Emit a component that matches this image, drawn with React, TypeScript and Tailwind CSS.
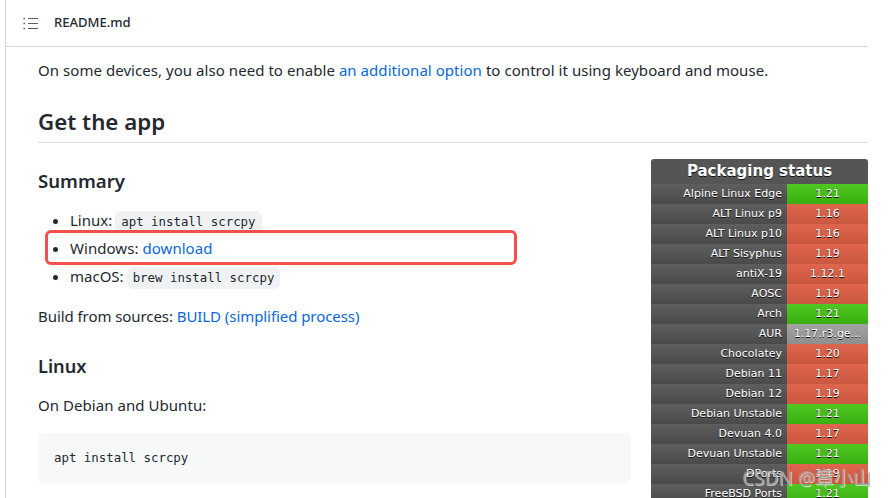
interface Row {
  name: string;
  version: string;
  status: 'ok' | 'old' | 'other';
}

const rows: Row[] = [
  { name: 'Alpine Linux Edge', version: '1.21', status: 'ok' },
  { name: 'ALT Linux p9', version: '1.16', status: 'old' },
  { name: 'ALT Linux p10', version: '1.16', status: 'old' },
  { name: 'ALT Sisyphus', version: '1.19', status: 'old' },
  { name: 'antiX-19', version: '1.12.1', status: 'old' },
  { name: 'AOSC', version: '1.19', status: 'old' },
  { name: 'Arch', version: '1.21', status: 'ok' },
  { name: 'AUR', version: '1.17.r3.ge...', status: 'other' },
  { name: 'Chocolatey', version: '1.20', status: 'old' },
  { name: 'Debian 11', version: '1.17', status: 'old' },
  { name: 'Debian 12', version: '1.19', status: 'old' },
  { name: 'Debian Unstable', version: '1.21', status: 'ok' },
  { name: 'Devuan 4.0', version: '1.17', status: 'old' },
  { name: 'Devuan Unstable', version: '1.21', status: 'ok' },
  { name: 'DPorts', version: '1.19', status: 'old' },
  { name: 'FreeBSD Ports', version: '1.21', status: 'ok' },
];

const statusClass = {
  ok: 'from-[#4ec820] to-[#3aae12]',
  old: 'from-[#e0654e] to-[#c9573f]',
  other: 'from-[#a3a3a3] to-[#8e8e8e]',
};

function InlineCode({ children }: { children: string }) {
  return (
    <code className="ml-[3px] inline-block h-[22px] rounded-md bg-[#eff1f3] px-[6px] align-middle font-['DejaVu_Sans_Mono',monospace] text-[12.4px] leading-[22px]">
      {children}
    </code>
  );
}

function PackagingStatus() {
  return (
    <div className="w-[217px] shrink-0 overflow-hidden rounded-t-[3px] font-['DejaVu_Sans',sans-serif] text-white [text-shadow:0_1px_0_#111]">
      <div className="flex h-[25px] items-center justify-center bg-[#555] text-[15px] font-bold">Packaging status</div>
      {rows.map((row) => (
        <div key={row.name} className="flex h-5 text-[11px] leading-5">
          <div className="w-[136px] truncate bg-linear-to-b from-[#5e5e5e] to-[#4a4a4a] pr-[5px] text-right">{row.name}</div>
          <div className={`flex-1 bg-linear-to-b text-center ${statusClass[row.status]}`}>{row.version}</div>
        </div>
      ))}
    </div>
  );
}

export default function App() {
  return (
    <div className="relative h-[498px] w-[888px] overflow-hidden bg-white font-['Noto_Sans',sans-serif] text-[#24292f]">
      <div className="ml-[5px] h-full border-l border-[#d0d7de] pr-5">
        <div className="flex h-[47px] items-center border-b border-[#d0d7de] pl-[17px]">
          <svg width="15" height="13" viewBox="0 0 15 13" className="text-[#57606a]" fill="none" stroke="currentColor">
            <path d="M5 1.5h10M5 6.5h10M5 11.5h10" strokeWidth="1.2" />
            <path d="M0.5 1.5h1.5M0.5 6.5h1.5M0.5 11.5h1.5" strokeWidth="1.4" />
          </svg>
          <span className="ml-[16px] text-[13px] font-medium">README.md</span>
        </div>

        <div className="pl-8">
          <p className="mt-[11px] text-[15px] leading-6 tracking-[0.05px]">
            On some devices, you also need to enable <a className="text-[#0969da]">an additional option</a> to control it using keyboard and mouse.
          </p>
          <h2 className="mt-[25px] border-b border-[#d8dee4] pb-[5px] text-[22.3px] leading-[30px] font-semibold">Get the app</h2>

          <div className="mt-4 flex justify-between">
            <div className="w-[593px]">
              <h3 className="mt-[8px] text-[18.6px] leading-[28px] font-semibold">Summary</h3>
              <ul className="mt-[12px] list-disc pl-8 text-[15px]">
                <li className="h-[27px] leading-[27px]">Linux:<InlineCode>apt install scrcpy</InlineCode></li>
                <li className="h-[28px] pt-px leading-[27px] tracking-[0.05px]">Windows: <a className="text-[#0969da]">download</a></li>
                <li className="h-[28px] leading-[28px]">macOS:<InlineCode>brew install scrcpy</InlineCode></li>
              </ul>
              <p className="mt-[14px] text-[15px] leading-6 tracking-[-0.07px]">
                Build from sources: <a className="text-[#0969da]">BUILD</a> <a className="text-[#0969da]">(simplified process)</a>
              </p>
              <h3 className="mt-[24px] text-[18.2px] leading-[28px] font-semibold">Linux</h3>
              <p className="mt-[13px] text-[15px] leading-6 tracking-[0.05px]">On Debian and Ubuntu:</p>
              <pre className="mt-[16px] flex h-[51px] items-center rounded-md bg-[#f6f8fa] px-4 font-['DejaVu_Sans_Mono',monospace] text-[12.4px]">apt install scrcpy</pre>
            </div>
            <PackagingStatus />
          </div>
        </div>
      </div>

      {/* red annotation over the Windows row */}
      <div className="absolute top-[230px] left-[45px] h-[35px] w-[472px] rounded-[6px] border-[3px] border-[#f34f4c]" />

      {/* CSDN watermark */}
      <div className="absolute top-[465px] left-[742px] font-['Noto_Sans','Noto_Sans_CJK_SC',sans-serif] text-[19px] leading-[26px] whitespace-nowrap text-[#a0a0a0]/90 [text-shadow:1px_1px_0_rgba(255,255,255,0.6)]">
        CSDN @章小山
      </div>
    </div>
  );
}
